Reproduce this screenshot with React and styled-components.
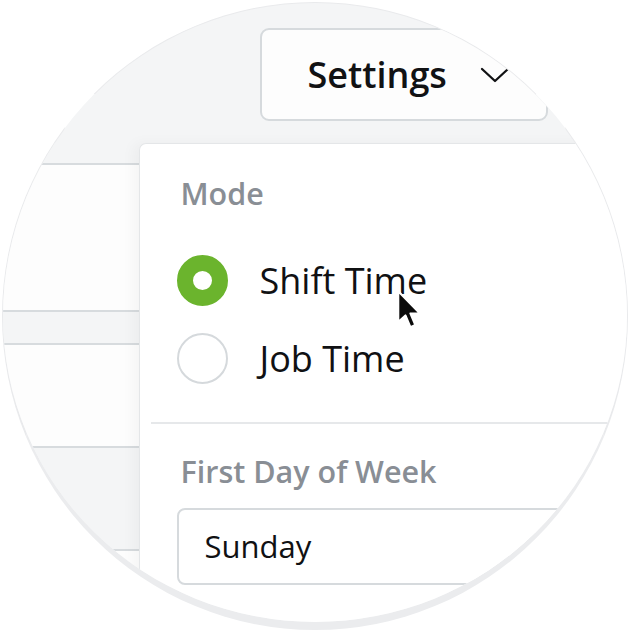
import React from "react";
import styled, { createGlobalStyle } from "styled-components";

const Global = createGlobalStyle`
  html, body { margin: 0; padding: 0; background: #ffffff; }
  body { font-family: "Open Sans", "Noto Sans", sans-serif; }
  * { box-sizing: border-box; }
`;

const Stage = styled.div`
  width: 632px;
  height: 632px;
  padding: 2px 0 0 2px;
  background: #ffffff;
`;

const Circle = styled.div`
  position: relative;
  width: 626px;
  height: 628px;
  border-radius: 50%;
  border: 1.5px solid #e9eaec;
  border-bottom: 8px solid #ebecee;
  background: #f4f5f6;
  overflow: hidden;
  display: flex;
  flex-direction: column;
`;

const Header = styled.div`
  height: 139.5px;
  flex: none;
  padding: 24.5px 0 0 256.5px;
`;

const SettingsButton = styled.div`
  width: 288px;
  height: 93px;
  border: 2px solid #d6dadd;
  border-radius: 9px;
  background: #fdfdfd;
  display: flex;
  align-items: center;
  padding-left: 46px;
  gap: 33px;
  font-size: 36px;
  font-weight: 600;
  color: #111214;
`;

const Chevron = styled.svg`
  width: 30px;
  height: 18px;
  margin-top: 2px;
`;

const Body = styled.div`
  flex: 1;
  display: flex;
  min-height: 0;
`;

const Table = styled.div`
  width: 135.5px;
  flex: none;
  display: flex;
  flex-direction: column;
`;

const TableRow = styled.div`
  height: ${(p) => (p.$h ? `${p.$h}px` : "auto")};
  flex: ${(p) => (p.$h ? "none" : "1")};
  background: ${(p) => (p.$tone === "grey" ? "#f4f5f6" : "#fdfdfd")};
  border-bottom: ${(p) => (p.$last ? "none" : "2px solid #d7dbde")};
`;

const Panel = styled.div`
  flex: 1;
  background: #ffffff;
  border-top: 1px solid #e4e6e8;
  border-left: 1px solid #e4e6e8;
  border-top-left-radius: 7px;
  box-shadow: -6px 0 14px rgba(0, 0, 0, 0.035);
  display: flex;
  flex-direction: column;
  position: relative;
`;

const Section = styled.div`
  padding: ${(p) => p.$pt}px 0 0 37px;
  display: flex;
  flex-direction: column;
`;

const Label = styled.div`
  font-size: 30.5px;
  line-height: 36px;
  font-weight: 600;
  color: #898e95;
  margin-left: 4px;
  white-space: nowrap;
`;

const Options = styled.div`
  margin-top: 31px;
  display: flex;
  flex-direction: column;
`;

const Option = styled.div`
  height: 78px;
  display: flex;
  align-items: center;
  gap: 32px;
  font-size: 36px;
  color: #101113;
  white-space: nowrap;
`;

const Radio = styled.div`
  width: 51px;
  height: 51px;
  flex: none;
  border-radius: 50%;
  background: #ffffff;
  border: ${(p) => (p.$checked ? "16.5px solid #6bb42d" : "2px solid #d5d9dc")};
`;

const Divider = styled.div`
  height: 2px;
  background: #e6e8ea;
  margin: 24px 0 0 11px;
`;

const Select = styled.div`
  margin-top: 19px;
  width: 480px;
  height: 77px;
  border: 2px solid #d6dadd;
  border-radius: 8px;
  display: flex;
  align-items: center;
  padding-left: 26px;
  font-size: 31px;
  color: #101113;
  background: #ffffff;
`;

const Cursor = styled.svg`
  position: absolute;
  left: 256px;
  top: 145px;
  width: 30px;
  height: 42px;
  pointer-events: none;
`;

export default function App() {
  return (
    <>
      <Global />
      <Stage>
        <Circle>
          <Header>
            <SettingsButton>
              <span>Settings</span>
              <Chevron viewBox="0 0 30 18" fill="none">
                <polyline
                  points="2,3 15,15 28,3"
                  stroke="#111214"
                  strokeWidth="2.3"
                  strokeLinecap="round"
                  strokeLinejoin="round"
                />
              </Chevron>
            </SettingsButton>
          </Header>
          <Body>
            <Table>
              <TableRow $tone="grey" $h={22.5} />
              <TableRow $tone="white" $h={147} />
              <TableRow $tone="grey" $h={33} />
              <TableRow $tone="white" $h={103} />
              <TableRow $tone="grey" $h={103} />
              <TableRow $tone="white" $last />
            </Table>
            <Panel>
              <Section $pt={31}>
                <Label>Mode</Label>
                <Options>
                  <Option>
                    <Radio $checked />
                    <span>Shift Time</span>
                  </Option>
                  <Option>
                    <Radio />
                    <span>Job Time</span>
                  </Option>
                </Options>
              </Section>
              <Divider />
              <Section $pt={29}>
                <Label>First Day of Week</Label>
                <Select>Sunday</Select>
              </Section>
              <Cursor viewBox="0 0 20 28">
                <path
                  d="M1.5 1.5 L1.5 22 L6.3 17.6 L9.6 25.4 L12.9 24 L9.6 16.3 L16 16.3 Z"
                  fill="#0a0a0a"
                  stroke="#ffffff"
                  strokeWidth="1.4"
                  strokeLinejoin="round"
                />
              </Cursor>
            </Panel>
          </Body>
        </Circle>
      </Stage>
    </>
  );
}
